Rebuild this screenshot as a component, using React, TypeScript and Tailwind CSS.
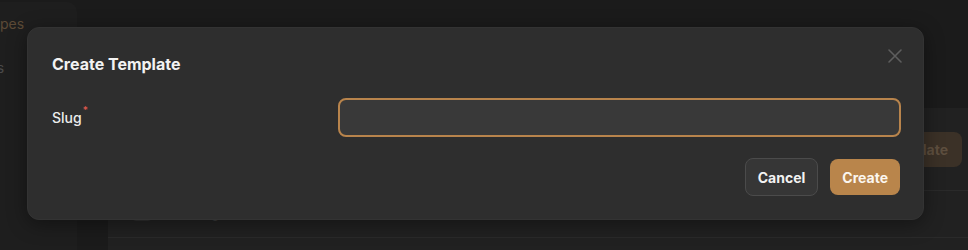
import React from "react";

export default function App() {
  return (
    <div
      className="relative w-[968px] h-[250px] overflow-hidden bg-[#1b1b1b]"
      style={{ fontFamily: "Inter, 'Noto Sans', sans-serif" }}
    >
      {/* background page */}
      <div className="flex h-full">
        <div className="w-[77px] mt-[2px] rounded-tr-[10px] bg-[#1e1e1e] flex flex-col pt-[12px] overflow-hidden">
          <div className="text-[14px] text-[#5c4a36] -ml-[16px] h-[20px] leading-[20px] whitespace-nowrap">Types</div>
          <div className="text-[14px] text-[#4a4a4a] -ml-[35px] mt-[24px] h-[20px] leading-[20px] whitespace-nowrap">Fields</div>
        </div>
        <div className="w-[31px]" />
        <div className="flex-1 flex flex-col">
          <div className="h-[108px]" />
          <div className="flex-1 bg-[#212121] flex flex-col">
            <div className="h-[82px] flex items-center justify-end pr-[6px]">
              <div className="h-[35px] px-[14px] rounded-[8px] bg-[#3b3127] text-[#5e4f3f] font-bold text-[14px] flex items-center">
                Create Template
              </div>
            </div>
            <div className="h-[48px] border-t border-b border-[#2a2a2a] flex items-center pl-[24px] gap-[40px]">
              <div className="w-[20px] h-[14px] rounded-[4px] border border-[#2e2e2e]" />
              <div className="text-[#3a3a3a] text-[13px]">Slug</div>
            </div>
          </div>
        </div>
      </div>

      {/* modal */}
      <div className="absolute left-[27px] top-[27px] w-[897px] h-[193px] rounded-[12px] bg-[#2e2e2e] border border-[#333333] shadow-[0_4px_20px_rgba(0,0,0,0.4)] pl-[24px] pr-[22px] pt-[24px]">
        <h2 className="text-[16px] font-bold text-[#f2f2f2] leading-[24px]">Create Template</h2>
        <button className="absolute right-[20px] top-[20px] text-[#5e5e5e]">
          <svg width="16" height="16" viewBox="0 0 16 16" fill="none" stroke="currentColor" strokeWidth="1.6" strokeLinecap="round">
            <path d="M2 2L14 14M14 2L2 14" />
          </svg>
        </button>
        <div className="flex items-center mt-[22px]">
          <label className="w-[286px] text-[14px] font-medium text-[#ececec] flex items-start">
            Slug<span className="text-[#e05a4f] text-[10px] leading-[10px] ml-[1px] -mt-[2px]">*</span>
          </label>
          <input
            className="flex-1 h-[39px] rounded-[8px] border-2 border-[#b8844c] bg-[#393939] outline-none px-[12px] text-[14px] text-white"
          />
        </div>
        <div className="flex justify-end items-center gap-[12px] mt-[21px] pr-[1px]">
          <button className="h-[38px] px-[12px] rounded-[8px] bg-[#363636] border border-[#4b4b4b] text-[14px] font-bold text-[#f2f2f2]">
            Cancel
          </button>
          <button className="h-[36px] px-[12px] rounded-[8px] bg-[#b9854b] text-[14px] font-bold text-[#fbf6ef]">
            Create
          </button>
        </div>
      </div>
    </div>
  );
}
